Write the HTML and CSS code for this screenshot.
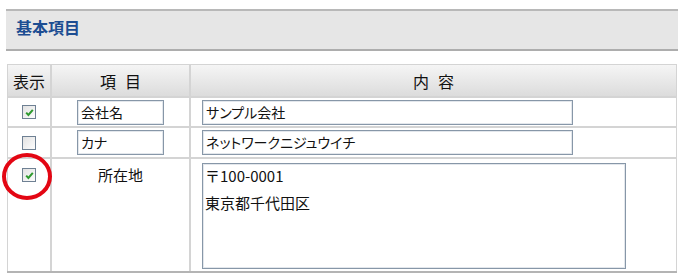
FILE: index.html
```html
<!DOCTYPE html>
<html lang="ja">
<head>
<meta charset="utf-8">
<link rel="stylesheet" href="styles.css">
</head>
<body>
<div class="page">
  <div class="heading">基本項目</div>
  <div class="grid">
    <div class="cell head">表示</div>
    <div class="cell head spaced"><span>項</span><span>目</span></div>
    <div class="cell head spaced"><span>内</span><span>容</span></div>

    <div class="cell chk"><span class="box"><svg viewBox="0 0 11 11" width="11" height="11"><path d="M2.2 5.6 L4.4 8 L8.8 2.8" fill="none" stroke="#2f9a2f" stroke-width="2"/></svg></span></div>
    <div class="cell name"><div class="input small">会社名</div></div>
    <div class="cell val"><div class="input wide">サンプル会社</div></div>

    <div class="cell chk"><span class="box"></span></div>
    <div class="cell name"><div class="input small">カナ</div></div>
    <div class="cell val"><div class="input wide">ネットワークニジュウイチ</div></div>

    <div class="cell chk top"><span class="box"><svg viewBox="0 0 11 11" width="11" height="11"><path d="M2.2 5.6 L4.4 8 L8.8 2.8" fill="none" stroke="#2f9a2f" stroke-width="2"/></svg></span></div>
    <div class="cell label">所在地</div>
    <div class="cell val"><div class="area"><div class="area-text">〒100-0001<br>東京都千代田区</div></div></div>
  </div>
  <div class="ring"></div>
</div>
</body>
</html>
```
FILE: styles.css
```css
* { box-sizing: border-box; }
html, body { margin: 0; padding: 0; background: #fff; }
body { font-family: "Noto Sans CJK JP", "Liberation Sans", sans-serif; color: #111; }
.page { position: relative; width: 692px; height: 274px; padding-top: 9px; }
.heading {
  margin-left: 6px;
  width: 672px;
  height: 42px;
  background: #e6e6e6;
  border-top: 2px solid #b8b8b8;
  border-bottom: 2px solid #adadad;
  color: #1c4d92;
  font-weight: bold;
  font-size: 16px;
  line-height: 20px;
  padding: 6px 0 0 10px;
}
.grid {
  margin: 13px 0 0 7px;
  width: 670px;
  display: grid;
  grid-template-columns: 42px 137px 485px;
  grid-template-rows: 31px 28px 29px 112px;
  gap: 2px;
  padding: 1px 1px 0 1px;
  background: #d4d4d4;
  border-bottom: 2px solid #b4b4b4;
}
.cell { background: #fff; }
.head {
  background: linear-gradient(#f5f5f5, #dcdcdc);
  font-size: 16px;
  display: flex;
  align-items: center;
  justify-content: center;
  padding-top: 1px;
}
.spaced { gap: 9px; }
.chk { display: flex; align-items: center; justify-content: center; }
.chk.top { align-items: flex-start; padding-top: 9px; }
.box {
  width: 14px; height: 14px;
  border: 1px solid #6e8093;
  background: linear-gradient(135deg, #e2e2e2, #fdfdfd);
  display: flex; align-items: center; justify-content: center;
}
.box svg { display: block; }
.name { padding: 2px 0 0 25px; }
.val { padding: 2px 0 0 11px; }
.input {
  height: 25px;
  border: 1px solid #8797a8;
  box-shadow: inset 0 0 0 1px #e3e7ec;
  background: #fff;
  font-size: 14px;
  line-height: 22px;
  padding: 0 3px;
  font-feature-settings: "palt";
  white-space: nowrap;
}
.small { width: 87px; }
.wide { width: 371px; }
.label {
  font-size: 15px;
  line-height: 20px;
  text-align: center;
  padding-top: 6px;
}
.val .area {
  margin-top: 2px;
  width: 424px;
  height: 106px;
  border: 1px solid #8797a8;
  box-shadow: inset 0 0 0 1px #e3e7ec;
  font-size: 15px;
  line-height: 27px;
  padding: 0 0 0 2px;
}
.area-text { margin-top: -2px; }
.ring {
  position: absolute;
  left: 2px;
  top: 153px;
  width: 50px;
  height: 47px;
  border: 4px solid #e30613;
  border-radius: 50%;
}
```
